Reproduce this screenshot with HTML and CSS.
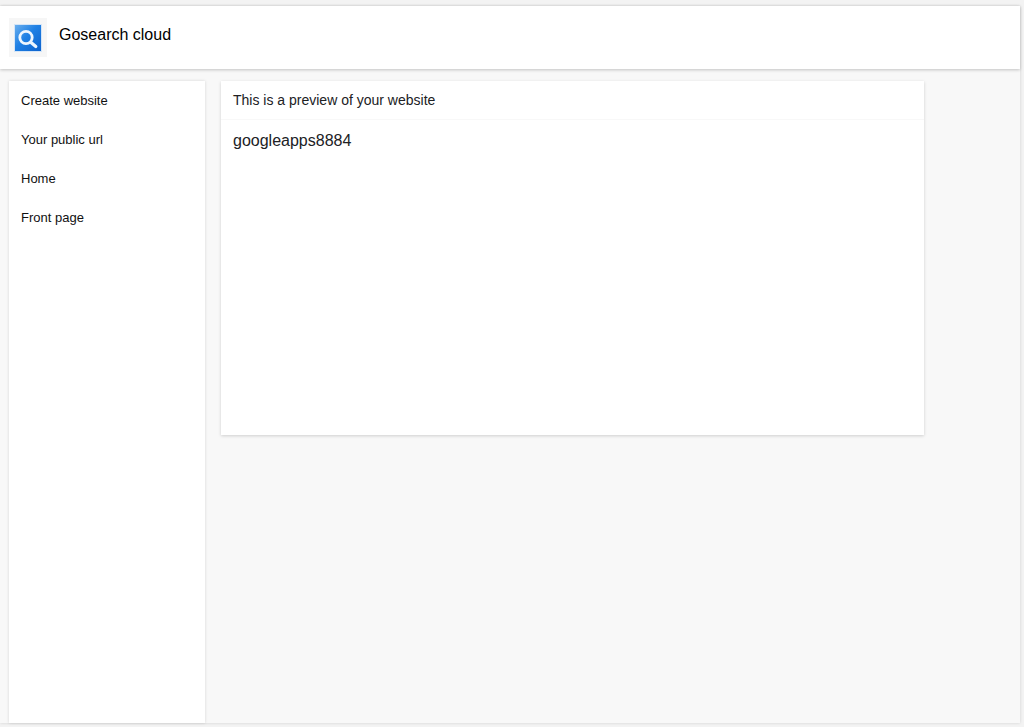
FILE: index.html
```html
<!DOCTYPE html>
<html lang="en">
<head>
<meta charset="utf-8">
<title>Gosearch cloud</title>
<link rel="stylesheet" href="styles.css">
</head>
<body>
<div class="frame">
  <header class="topbar">
    <div class="logo-tile">
      <svg class="logo" viewBox="0 0 28 28" width="28" height="28" aria-hidden="true">
        <defs>
          <linearGradient id="logo-fill" x1="0" y1="0" x2="1" y2="1">
            <stop offset="0" stop-color="#6cb0ee"/>
            <stop offset="0.45" stop-color="#1f80e4"/>
            <stop offset="1" stop-color="#0e62cc"/>
          </linearGradient>
        </defs>
        <rect x="0.5" y="0.5" width="27" height="27" fill="url(#logo-fill)" stroke="#d4e5f7"/>
        <circle cx="12" cy="13.5" r="6.2" fill="none" stroke="#eef6fe" stroke-width="2.8"/>
        <path d="M17 18.5l4.8 4" fill="none" stroke="#eef6fe" stroke-width="3.2" stroke-linecap="round"/>
      </svg>
    </div>
    <span class="brand">Gosearch cloud</span>
  </header>
  <div class="workspace">
    <nav class="sidebar">
      <a class="nav-item">Create website</a>
      <a class="nav-item">Your public url</a>
      <a class="nav-item">Home</a>
      <a class="nav-item">Front page</a>
    </nav>
    <main class="card">
      <div class="card-head">This is a preview of your website</div>
      <div class="card-body">googleapps8884</div>
    </main>
  </div>
</div>
</body>
</html>
```
FILE: styles.css
```css
* { box-sizing: border-box; }
html, body { height: 100%; }
body {
  margin: 0;
  background: #f3f3f3;
  font-family: "Liberation Sans", Arial, sans-serif;
  color: #202124;
  overflow: hidden;
}
.frame {
  display: flex;
  flex-direction: column;
  width: 1020px;
  height: 717px;
  margin-top: 6px;
  background: #f8f8f8;
  box-shadow: 0 0 3px rgba(0, 0, 0, 0.14);
}
.topbar {
  display: flex;
  align-items: center;
  flex: 0 0 63px;
  padding: 0 0 0 9px;
  background: #fff;
  box-shadow: 0 1px 3px rgba(0, 0, 0, 0.22);
}
.logo-tile {
  display: flex;
  align-items: center;
  justify-content: center;
  width: 38px;
  height: 39px;
  background: #f6f6f6;
}
.brand {
  margin-left: 12px;
  margin-bottom: 5px;
  font-size: 16px;
  color: #000;
}
.workspace {
  display: flex;
  flex: 1;
  align-items: flex-start;
  gap: 16px;
  padding: 12px 0 0 9px;
  min-height: 0;
}
.sidebar {
  display: flex;
  flex-direction: column;
  align-self: stretch;
  width: 196px;
  background: #fff;
  box-shadow: 0 0 3px rgba(0, 0, 0, 0.14);
}
.nav-item {
  height: 39px;
  padding: 0 12px;
  font-size: 13px;
  line-height: 39px;
  color: #111;
}
.card {
  width: 703px;
  height: 354px;
  background: #fff;
  box-shadow: 0 1px 3px rgba(0, 0, 0, 0.17);
}
.card-head {
  height: 39px;
  padding: 0 12px;
  font-size: 14px;
  line-height: 38px;
  color: #202124;
  border-bottom: 1px solid #f8f8f8;
}
.card-body {
  padding: 12px;
  font-size: 16px;
  line-height: 18px;
  color: #202124;
}
```
